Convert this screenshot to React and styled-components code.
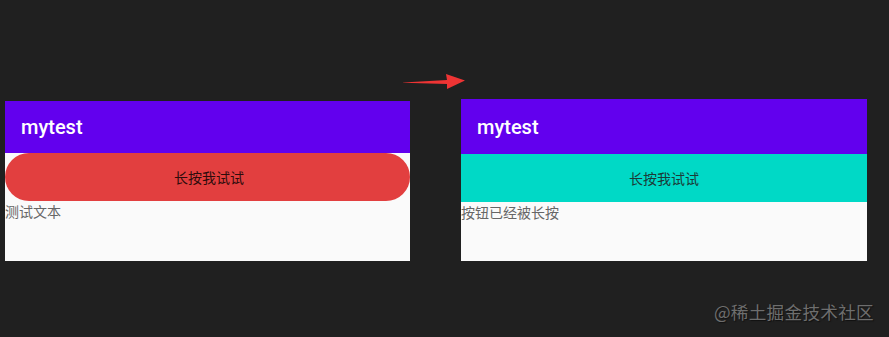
import React from "react";
import styled, { createGlobalStyle } from "styled-components";

const Global = createGlobalStyle`
  html, body { margin: 0; padding: 0; background: #202020; }
  body { width: 889px; height: 337px; overflow: hidden; font-family: Roboto, "Noto Sans CJK SC", sans-serif; }
`;

const Stage = styled.div`
  position: relative;
  width: 889px;
  height: 337px;
  background: #202020;
  display: flex;
  align-items: flex-start;
  gap: 51px;
  padding: 99px 0 0 5px;
  box-sizing: border-box;
`;

const Phone = styled.div`
  width: ${p => p.$w}px;
  margin-top: ${p => p.$offset || 0}px;
  background: #fafafa;
  display: flex;
  flex-direction: column;
`;

const AppBar = styled.div`
  height: ${p => p.$h}px;
  background: #6200ee;
  display: flex;
  align-items: center;
  padding-left: 16px;
  color: #ffffff;
  font-family: Roboto, sans-serif;
  font-weight: 500;
  font-size: 20px;
  box-sizing: border-box;
`;

const PressButton = styled.div`
  height: 48px;
  background: ${p => (p.$pressed ? "#00d9c6" : "#e23f3f")};
  border-radius: ${p => (p.$pressed ? "0" : "24px")};
  display: flex;
  align-items: center;
  justify-content: center;
  padding-left: ${p => (p.$pressed ? "0" : "3px")};
  font-family: "Noto Sans CJK SC", sans-serif;
  font-size: 14px;
  color: ${p => (p.$pressed ? "#1c3a37" : "#2e0c0c")};
`;

const Body = styled.div`
  height: ${p => p.$h}px;
  font-family: "Noto Sans CJK SC", sans-serif;
  font-size: 14px;
  line-height: 20px;
  color: #666666;
`;

const Arrow = styled.svg`
  position: absolute;
  left: 400px;
  top: 72px;
`;

const Watermark = styled.div`
  position: absolute;
  right: 15px;
  top: 299px;
  font-family: "Noto Sans CJK SC", sans-serif;
  font-size: 17.6px;
  color: #6e6e6e;
  text-shadow: 1px 1px 1px rgba(0,0,0,0.5);
  letter-spacing: 0.3px;
`;

export default function App() {
  return (
    <>
      <Global />
      <Stage>
        <Phone $w={405} $offset={2}>
          <AppBar $h={52}>mytest</AppBar>
          <PressButton>长按我试试</PressButton>
          <Body $h={60}>测试文本</Body>
        </Phone>
        <Phone $w={406}>
          <AppBar $h={55}>mytest</AppBar>
          <PressButton $pressed>长按我试试</PressButton>
          <Body $h={59}>按钮已经被长按</Body>
        </Phone>
        <Arrow width="70" height="22" viewBox="0 0 70 22">
          <path d="M3 10.5 L47 8 L46 2 L65 8.5 L47 17 L47 12 L3 10.8 Z" fill="#ee3434" />
        </Arrow>
        <Watermark>@稀土掘金技术社区</Watermark>
      </Stage>
    </>
  );
}
